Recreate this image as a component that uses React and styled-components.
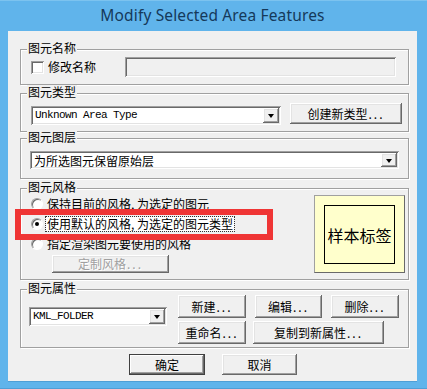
import React from 'react';
import styled, { createGlobalStyle } from 'styled-components';

const GlobalStyle = createGlobalStyle`
  html, body { margin: 0; padding: 0; }
  body {
    background: #5fb3ea;
    font-family: "Noto Sans CJK SC", "Noto Sans", sans-serif;
    font-size: 12px;
    color: #000;
  }
  #root { width: 427px; height: 389px; overflow: hidden; }
`;

const Window = styled.div`
  position: relative;
  box-sizing: border-box;
  width: 427px;
  height: 389px;
  background: #60b4eb;
  display: flex;
  flex-direction: column;
  padding: 0 10px 8px 8px;
  box-shadow: inset 0 -1px #4f9fd6, inset 0 1px #7cc3ef;
`;

const TitleBar = styled.div`
  height: 31px;
  display: flex;
  align-items: center;
  justify-content: center;
  font-family: "Noto Sans", sans-serif;
  font-size: 15.5px;
  letter-spacing: 0.15px;
  color: #15395a;
  padding-bottom: 1px;
  box-sizing: border-box;
`;

const Client = styled.div`
  flex: 1;
  background: #f0f0f0;
  display: flex;
  flex-direction: column;
  padding: 0 8px 0 12px;
  box-shadow: 0 1px #4f9fd6;
`;

const Group = styled.div`
  position: relative;
  box-sizing: border-box;
  margin-top: ${p => p.$mt}px;
  height: ${p => p.$h}px;
  border: 1px solid #a0a0a0;
  box-shadow: inset 1px 1px #fff, 1px 1px #fff;
  padding: ${p => p.$pad};
  display: flex;
  flex-direction: ${p => p.$dir || 'row'};
  align-items: flex-start;
`;

const Caption = styled.span`
  position: absolute;
  top: -9px;
  left: 6px;
  padding: 0 1px;
  line-height: 14px;
  background: #f0f0f0;
`;

const Label = styled.span`
  line-height: 14px;
  white-space: nowrap;
  margin-left: ${p => p.$ml || 0}px;
`;

const Row = styled.div`
  display: flex;
  align-items: ${p => p.$align || 'center'};
  height: ${p => p.$h || 20}px;
  gap: ${p => p.$gap || 0}px;
  margin-top: ${p => p.$mt || 0}px;
  margin-left: ${p => p.$ml || 0}px;
  width: ${p => (p.$full ? '100%' : 'auto')};
`;

const CheckBox = styled.span`
  box-sizing: border-box;
  width: 13px;
  height: 13px;
  background: #fff;
  box-shadow: inset 1px 1px #a0a0a0, inset -1px -1px #fff, inset 2px 2px #696969, inset -2px -2px #e3e3e3;
  flex: none;
`;

const Field = styled.div`
  box-sizing: border-box;
  width: ${p => p.$w}px;
  height: ${p => p.$h}px;
  margin-top: ${p => p.$mt || 0}px;
  margin-left: ${p => (p.$auto ? 'auto' : '0')};
  background: ${p => (p.$disabled ? '#f0f0f0' : '#fff')};
  box-shadow: inset 1px 1px #a0a0a0, inset -1px -1px #fff, inset 2px 2px #696969, inset -2px -2px #e3e3e3;
  display: flex;
  align-items: center;
  padding: 2px 2px 2px 4px;
  flex: none;
`;

const FieldText = styled.span`
  flex: 1;
  white-space: nowrap;
  line-height: 13px;
  font-family: ${p => (p.$mono ? '"Liberation Mono", "DejaVu Sans Mono", monospace' : 'inherit')};
  font-size: ${p => (p.$mono ? '11px' : '12px')};
  letter-spacing: ${p => (p.$mono ? '-0.6px' : '0')};
`;

const DropButton = styled.span`
  box-sizing: border-box;
  width: 16px;
  height: 100%;
  background: #f0f0f0;
  box-shadow: inset -1px -1px #696969, inset 1px 1px #fff, inset -2px -2px #a0a0a0, inset 2px 2px #e3e3e3;
  display: flex;
  align-items: center;
  justify-content: center;
  flex: none;
  &::after {
    content: "";
    width: 0;
    height: 0;
    border-left: 3.5px solid transparent;
    border-right: 3.5px solid transparent;
    border-top: 4px solid #000;
    margin-top: 1px;
  }
`;

const Btn = styled.button`
  box-sizing: border-box;
  width: ${p => p.$w}px;
  height: ${p => p.$h || 23}px;
  margin: ${p => p.$m || 0};
  padding: 0;
  border: none;
  background: #f0f0f0;
  font-family: "Noto Sans CJK SC", sans-serif;
  font-size: 12px;
  line-height: 14px;
  color: ${p => (p.disabled ? '#a0a0a0' : '#000')};
  text-shadow: ${p => (p.disabled ? '1px 1px #fff' : 'none')};
  white-space: nowrap;
  flex: none;
  box-shadow: ${p =>
    p.$default
      ? 'inset 0 0 0 1px #404040, inset -2px -2px #696969, inset 2px 2px #fff, inset -3px -3px #a0a0a0'
      : 'inset -1px -1px #696969, inset 1px 1px #fff, inset -2px -2px #a0a0a0, inset 2px 2px #e3e3e3'};
`;

const Dots = styled.span`
  letter-spacing: 2px;
  margin-left: 1px;
`;

const Column = styled.div`
  display: flex;
  flex-direction: column;
  flex: 1;
`;

const RadioRow = styled.div`
  display: flex;
  align-items: center;
  height: 20px;
`;

const Radio = styled.span`
  box-sizing: border-box;
  width: 12px;
  height: 12px;
  border-radius: 50%;
  background: #fff;
  border: 1px solid;
  border-color: #a0a0a0 #fff #fff #a0a0a0;
  box-shadow: inset 1px 1px #696969;
  flex: none;
  margin-right: 4px;
  display: flex;
  align-items: center;
  justify-content: center;
  &::after {
    content: "";
    width: 4px;
    height: 4px;
    border-radius: 50%;
    background: ${p => (p.$checked ? '#000' : 'transparent')};
  }
`;

const RadioText = styled.span`
  line-height: 14px;
  white-space: nowrap;
  padding: 0 1px;
  margin-left: -1px;
  background: ${p => (p.$focus ? '#fff' : 'transparent')};
  outline: ${p => (p.$focus ? '1px dotted #333' : 'none')};
`;

const Sample = styled.div`
  box-sizing: border-box;
  width: 91px;
  height: 78px;
  margin-top: 1px;
  background: #ffffcc;
  border: 1px solid;
  border-color: #a0a0a0 #696969 #696969 #a0a0a0;
  padding: 9px 9px 8px 9px;
  display: flex;
  flex: none;
`;

const SampleInner = styled.div`
  flex: 1;
  border: 1px solid #000;
  display: flex;
  align-items: center;
  justify-content: center;
  font-size: 16px;
  white-space: nowrap;
`;

const Highlight = styled.div`
  position: absolute;
  left: -6px;
  top: 20px;
  width: 258px;
  height: 31px;
  box-sizing: border-box;
  border: 6px solid #ef3535;
  pointer-events: none;
`;

const ButtonGrid = styled.div`
  display: flex;
  flex-direction: column;
  gap: 3px;
  margin-left: 11px;
`;

const Footer = styled.div`
  display: flex;
  gap: 17px;
  margin-top: 6px;
  padding-left: 109px;
`;

export default function App() {
  return (
    <>
      <GlobalStyle />
      <Window>
        <TitleBar>Modify Selected Area Features</TitleBar>
        <Client>
          <Group $mt={18} $h={36} $pad="7px 12px 0 10px">
            <Caption>图元名称</Caption>
            <Row $full>
              <CheckBox />
              <Label $ml={4}>修改名称</Label>
              <Field $w={271} $h={20} $auto $disabled />
            </Row>
          </Group>

          <Group $mt={8} $h={39} $pad="9px 0 0 10px">
            <Caption>图元类型</Caption>
            <Row $h={21} $gap={9} $align="flex-start">
              <Field $w={250} $h={19} $mt={3}>
                <FieldText $mono>Unknown Area Type</FieldText>
                <DropButton />
              </Field>
              <Btn $w={112} $h={21}>
                创建新类型<Dots>...</Dots>
              </Btn>
            </Row>
          </Group>

          <Group $mt={6} $h={41} $pad="12px 0 0 9px">
            <Caption>图元图层</Caption>
            <Field $w={369} $h={18}>
              <FieldText>为所选图元保留原始层</FieldText>
              <DropButton />
            </Field>
          </Group>

          <Group $mt={9} $h={92} $pad="5px 3px 0 10px">
            <Caption>图元风格</Caption>
            <Column>
              <RadioRow>
                <Radio />
                <RadioText>保持目前的风格, 为选定的图元</RadioText>
              </RadioRow>
              <RadioRow>
                <Radio $checked />
                <RadioText $focus>使用默认的风格, 为选定的图元类型</RadioText>
              </RadioRow>
              <RadioRow>
                <Radio />
                <RadioText>指定渲染图元要使用的风格</RadioText>
              </RadioRow>
              <Btn $w={117} $h={18} $m="1px 0 0 21px" disabled>
                定制风格<Dots>...</Dots>
              </Btn>
            </Column>
            <Sample>
              <SampleInner>样本标签</SampleInner>
            </Sample>
            <Highlight />
          </Group>

          <Group $mt={9} $h={59} $pad="5px 0 0 8px">
            <Caption>图元属性</Caption>
            <Field $w={138} $h={19} $mt={12}>
              <FieldText $mono>KML_FOLDER</FieldText>
              <DropButton />
            </Field>
            <ButtonGrid>
              <Row $h={23} $gap={9}>
                <Btn $w={68}>新建<Dots>...</Dots></Btn>
                <Btn $w={67}>编辑<Dots>...</Dots></Btn>
                <Btn $w={68}>删除<Dots>...</Dots></Btn>
              </Row>
              <Row $h={23} $gap={7}>
                <Btn $w={68}>重命名<Dots>...</Dots></Btn>
                <Btn $w={131}>复制到新属性<Dots>...</Dots></Btn>
              </Row>
            </ButtonGrid>
          </Group>

          <Footer>
            <Btn $w={76} $h={21} $default>确定</Btn>
            <Btn $w={75} $h={21}>取消</Btn>
          </Footer>
        </Client>
      </Window>
    </>
  );
}
